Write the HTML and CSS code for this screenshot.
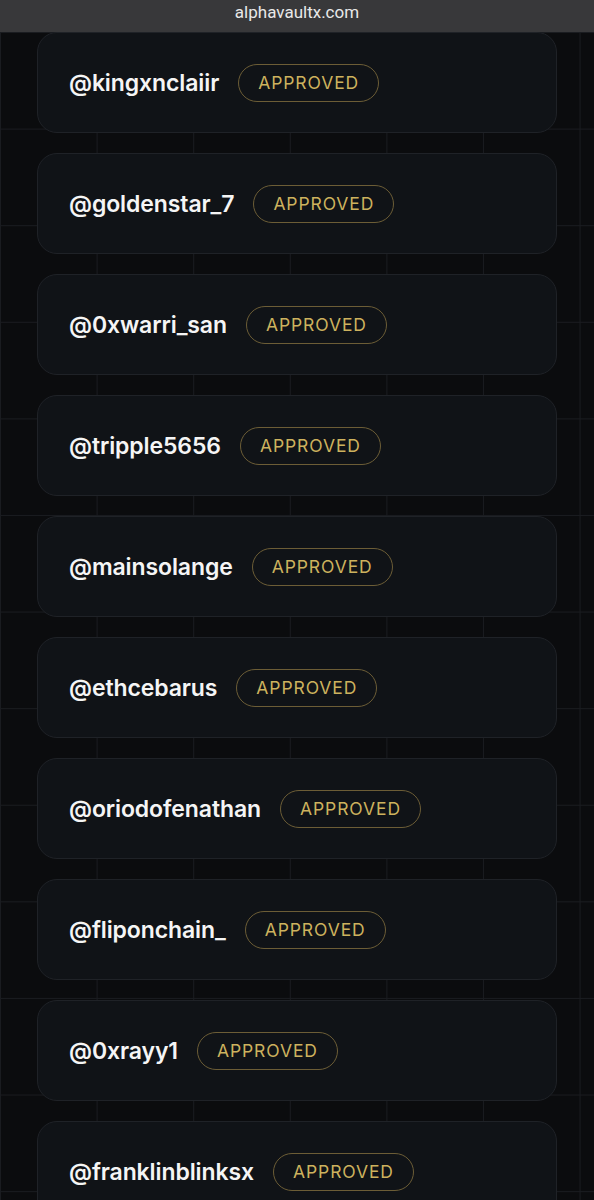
FILE: index.html
```html
<!DOCTYPE html>
<html lang="en">
<head>
<meta charset="utf-8">
<title>alphavaultx.com</title>
<link rel="stylesheet" href="styles.css">
</head>
<body>
<header class="topbar">alphavaultx.com</header>
<main class="feed">
  <div class="card"><span class="name">@kingxnclaiir</span><span class="badge">APPROVED</span></div>
  <div class="card"><span class="name">@goldenstar_7</span><span class="badge">APPROVED</span></div>
  <div class="card"><span class="name">@0xwarri_san</span><span class="badge">APPROVED</span></div>
  <div class="card"><span class="name">@tripple5656</span><span class="badge">APPROVED</span></div>
  <div class="card"><span class="name">@mainsolange</span><span class="badge">APPROVED</span></div>
  <div class="card"><span class="name">@ethcebarus</span><span class="badge">APPROVED</span></div>
  <div class="card"><span class="name">@oriodofenathan</span><span class="badge">APPROVED</span></div>
  <div class="card"><span class="name">@fliponchain_</span><span class="badge">APPROVED</span></div>
  <div class="card"><span class="name">@0xrayy1</span><span class="badge">APPROVED</span></div>
  <div class="card"><span class="name">@franklinblinksx</span><span class="badge">APPROVED</span></div>
</main>
</body>
</html>
```

FILE: styles.css
```css
html, body {
  margin: 0;
  padding: 0;
  background: #0b0c0e;
}

body {
  font-family: Inter, "Noto Sans", sans-serif;
  height: 1200px;
  overflow: hidden;
}

.topbar {
  height: 32px;
  background: #38383a;
  color: #e8e8e8;
  font-family: Roboto, "Noto Sans", sans-serif;
  font-size: 17px;
  line-height: 24px;
  text-align: center;
  position: relative;
  z-index: 2;
}

.feed {
  display: flex;
  flex-direction: column;
  gap: 20px;
  padding: 0 37px;
  height: 1168px;
  overflow: hidden;
  background-color: #0b0c0e;
  background-image:
    linear-gradient(to right, #1a1c20 1px, transparent 1px),
    linear-gradient(to bottom, #1a1c20 1px, transparent 1px);
  background-size: 96.6px 96.6px;
  background-position: 0 0;
}

.card {
  box-sizing: border-box;
  height: 101px;
  flex: 0 0 auto;
  display: flex;
  align-items: center;
  gap: 19px;
  padding-left: 31px;
  background: #101317;
  border: 1px solid #1f2227;
  border-radius: 20px;
}

.name {
  color: #f5f5f5;
  font-size: 23px;
  font-weight: 600;
  letter-spacing: -0.1px;
}

.badge {
  box-sizing: border-box;
  height: 38px;
  display: inline-flex;
  align-items: center;
  padding: 0 19px;
  border: 1.5px solid #6c5d36;
  border-radius: 19px;
  color: #cdb25e;
  font-size: 17.5px;
  font-weight: 400;
  letter-spacing: 0.9px;
}
```
